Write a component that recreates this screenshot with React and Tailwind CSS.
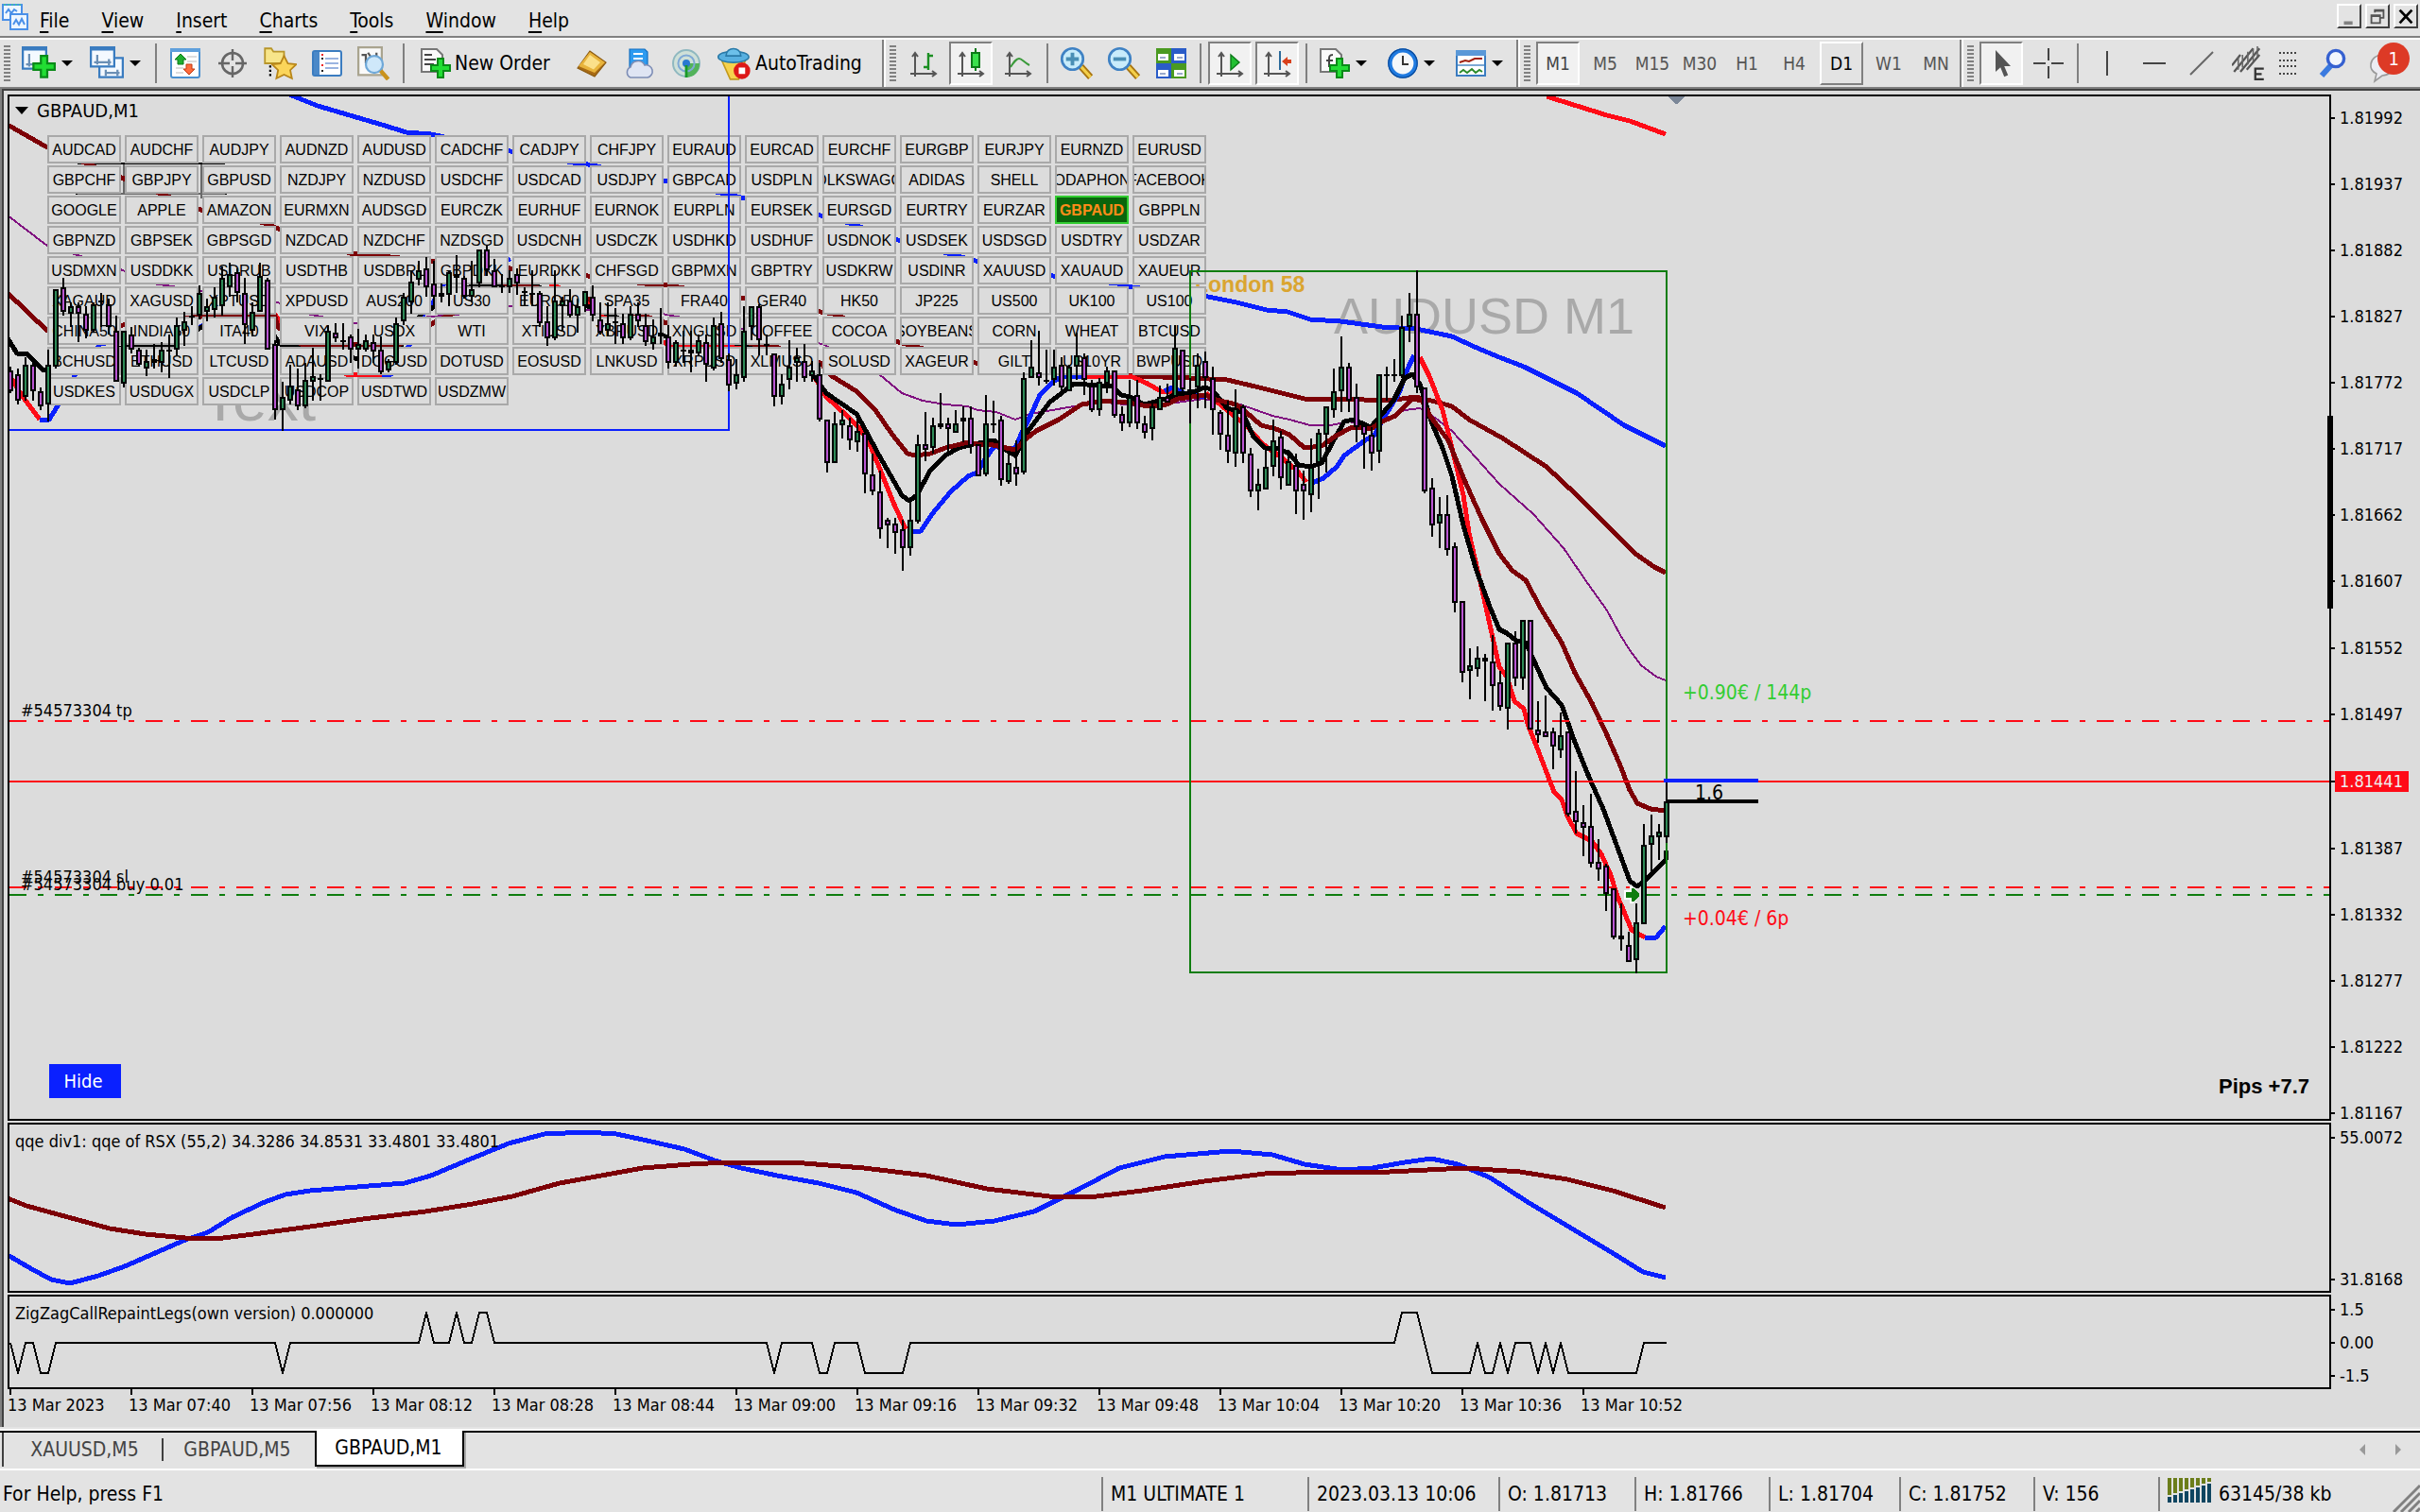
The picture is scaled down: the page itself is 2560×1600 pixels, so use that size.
// src/App.jsx
import clsx from "clsx";

const MENU = ["File", "View", "Insert", "Charts", "Tools", "Window", "Help"];

const SYMBOLS = `
AUDCAD AUDCHF AUDJPY AUDNZD AUDUSD CADCHF CADJPY CHFJPY EURAUD EURCAD EURCHF EURGBP EURJPY EURNZD EURUSD
GBPCHF GBPJPY GBPUSD NZDJPY NZDUSD USDCHF USDCAD USDJPY GBPCAD USDPLN VOLKSWAGON ADIDAS SHELL VODAPHONE FACEBOOK
GOOGLE APPLE AMAZON EURMXN AUDSGD EURCZK EURHUF EURNOK EURPLN EURSEK EURSGD EURTRY EURZAR GBPAUD GBPPLN
GBPNZD GBPSEK GBPSGD NZDCAD NZDCHF NZDSGD USDCNH USDCZK USDHKD USDHUF USDNOK USDSEK USDSGD USDTRY USDZAR
USDMXN USDDKK USDRUB USDTHB USDBRL GBPDKK EURDKK CHFSGD GBPMXN GBPTRY USDKRW USDINR XAUUSD XAUAUD XAUEUR
XAGAUD XAGUSD XPTUSD XPDUSD AUS200 US30 EURO50 SPA35 FRA40 GER40 HK50 JP225 US500 UK100 US100
CHINA50 INDIA50 ITA40 VIX USDX WTI XTIUSD XBRUSD XNGUSD COFFEE COCOA SOYBEANS CORN WHEAT BTCUSD
BCHUSD ETHUSD LTCUSD ADAUSD DOGUSD DOTUSD EOSUSD LNKUSD XRPUSD XLMUSD SOLUSD XAGEUR GILT US10YR BWPUSD
USDKES USDUGX USDCLP USDCOP USDTWD USDZMW`
  .trim()
  .split(/\s+/);

const PRICES = [
  "1.81992", "1.81937", "1.81882", "1.81827", "1.81772", "1.81717", "1.81662", "1.81607",
  "1.81552", "1.81497", "1.81441", "1.81387", "1.81332", "1.81277", "1.81222", "1.81167",
];

const DATES = [
  "2023", "07:40", "07:56", "08:12", "08:28", "08:44", "09:00",
  "09:16", "09:32", "09:48", "10:04", "10:20", "10:36", "10:52",
];

// high, open/close top, open/close bottom, low, 1 = bullish
const CANDLES = `
194,196,207,208,0 195,198,212,214,0 189,193,210,212,1 191,193,207,212,0 205,207,215,217,0 185,193,214,223,1
153,153,194,195,1 147,152,165,167,0 160,162,166,173,1 160,162,166,181,0 162,166,175,179,0 160,161,175,176,1
155,159,160,173,1 158,161,173,177,0 167,175,202,202,0 175,175,203,205,1 173,177,185,187,0 184,185,193,194,0
185,191,195,199,1 182,190,192,195,1 181,185,192,197,1 177,185,186,200,0 168,172,185,188,1 165,170,175,183,1
162,167,168,172,1 151,155,167,169,1 158,162,165,170,1 152,157,164,168,1 141,147,162,167,1 139,145,152,157,1
142,144,155,160,0 147,155,172,182,0 160,165,175,178,1 139,146,165,165,1 147,148,185,185,0 180,182,217,222,0
202,210,217,228,1 193,204,212,214,1 195,206,215,217,0 192,201,215,216,1 184,199,202,212,1 198,200,201,212,1
172,175,202,202,1 171,176,179,181,0 171,180,181,185,1 177,178,185,192,0 174,182,185,195,1 177,180,185,186,1
177,181,186,192,0 178,185,197,198,0 190,191,196,197,1 168,171,192,193,1 155,157,170,172,1 143,149,160,166,1
138,143,148,151,1 136,142,152,157,0 138,150,157,162,0 150,155,157,160,1 143,144,156,162,1 135,145,147,155,0
146,147,157,158,0 138,153,157,160,1 132,132,150,152,1 130,132,143,146,0 137,143,152,152,0 145,151,152,155,0
143,147,152,155,1 142,145,150,156,0 152,154,155,162,0 143,155,156,162,1 154,155,171,173,0 162,170,179,183,0
143,159,179,180,1 157,159,162,175,1 153,159,167,168,0 158,162,167,176,1 154,154,162,165,1 151,157,167,170,0
160,169,176,177,0 160,171,175,178,1 163,170,171,182,1 166,171,179,182,0 162,166,179,180,1 160,166,170,173,0
166,172,181,183,0 169,178,182,185,1 163,176,178,182,0 172,178,192,195,0 180,181,192,194,1 175,185,186,192,1
175,185,187,197,0 177,180,187,188,1 177,181,193,202,0 168,172,195,196,1 165,171,190,192,0 187,190,204,207,0
190,198,203,206,1 162,175,200,202,1 162,162,173,180,1 161,162,180,188,0 177,182,183,188,1 187,187,210,215,0
198,203,210,214,1 180,194,201,206,1 184,189,192,202,1 182,191,200,202,0 191,196,199,202,1 192,198,222,223,0
222,222,245,250,0 218,224,245,245,1 217,222,225,232,1 221,225,233,238,0 218,228,234,239,1 227,229,251,261,0
240,251,260,262,0 249,260,280,285,0 274,275,278,290,0 274,277,282,293,0 275,280,290,302,0 266,275,290,294,1
230,235,276,277,1 218,235,238,244,0 221,225,237,240,1 208,224,226,227,1 221,224,227,241,0 217,224,229,229,1
215,221,223,234,1 215,221,236,240,0 235,235,252,252,0 209,224,251,252,1 212,224,225,229,1 220,222,254,257,0
240,245,255,256,1 233,247,251,257,0 197,200,250,251,1 180,194,200,200,1 175,197,200,204,0 185,201,202,203,1
185,194,201,204,1 189,193,205,208,0 193,194,207,207,1 176,188,194,201,1 187,189,201,209,0 201,204,217,218,0
200,202,217,220,1 194,196,203,208,1 196,196,220,221,0 215,219,224,228,0 201,210,224,226,1 201,209,224,227,0
220,224,229,232,0 213,215,227,233,1 204,210,217,217,1 203,210,213,213,0 172,184,210,210,1 185,185,206,207,0
200,206,207,224,1 187,193,205,216,1 186,191,200,216,0 194,200,217,230,0 217,218,230,238,0 212,230,239,245,0
206,216,240,247,1 214,215,240,245,0 237,240,260,263,0 248,256,260,270,1 237,247,259,259,1 222,233,247,252,1
228,231,253,259,0 238,244,257,257,1 240,246,260,272,0 249,256,260,275,0 232,247,262,271,1 227,229,245,264,1
215,215,230,250,1 195,207,217,221,1 178,194,207,218,1 192,194,212,218,0 203,210,226,234,0 223,225,230,248,0
226,230,240,249,0 198,198,239,245,1 194,198,199,212,1 190,198,199,202,1 167,173,199,200,1 155,166,173,181,1
143,166,205,208,0 205,205,260,261,0 253,258,278,284,0 263,272,277,290,1 262,272,291,294,0 287,289,319,324,0
318,318,356,361,0 343,352,355,370,1 342,348,354,358,1 346,348,350,371,0 336,350,363,376,0 355,361,374,376,0
340,340,375,386,1 334,340,359,363,0 328,328,359,365,1 328,328,386,386,0 371,386,389,393,0 368,387,390,390,0
385,387,395,407,0 377,389,397,401,1 387,387,431,432,0 408,429,435,441,0 426,435,438,453,0 420,437,457,459,0
444,456,460,466,0 457,458,473,482,0 470,470,496,497,0 478,495,497,503,0 493,500,509,509,0 478,488,508,515,1
436,447,489,489,1 431,442,447,461,1 436,440,443,455,1 412,424,443,446,1`
  .trim()
  .split(/\s+/)
  .map((c) => c.split(",").map(Number));

const RED = "#ff0b17";
const BLUE = "#0a20ff";
const MAROON = "#7d0006";

// moving averages, drawn in this order
const AVERAGES = [
  {
    color: "#800f80",
    width: 1,
    points:
      "4,114 25,130 38,134 65,143 81,150 147,160 162,166 188,171 246,166 270,162 350,166 435,182 465,198 477,208 488,212 500,214 512,215 517,217 527,218 537,222 545,219 568,215 585,213 605,215 622,213 637,211 641,212 656,214 673,220 682,222 693,225 704,225 713,223 725,225 734,221 743,217 751,216 759,221 768,228 793,256 811,272 827,290 840,309 850,323 857,336 862,344 868,352 876,358 881,360",
  },
  {
    color: BLUE,
    points:
      "153,50 168,56 185,61 202,66 215,70 228,71 270,80 303,86 311,87 353,96 381,102 394,105 434,114 449,118 475,127 501,134 516,138 557,146 591,150 599,152 639,157 654,160 670,164 681,165 693,169 709,170 731,173 749,174 768,178 781,184 793,189 806,194 834,208 859,225 881,236",
  },
  { color: RED, points: "818,51 850,61 862,64 881,71" },
  {
    color: MAROON,
    points:
      "4,66 25,78 106,111 140,118 147,121 185,134 270,142 311,146 341,150 353,151 394,158 434,165 441,166 475,181 479,182 516,192 570,197 600,199 630,200 649,201 666,205 690,211 709,211 734,212 749,210 761,213 768,215 777,222 795,232 818,247 834,262 850,278 865,293 875,300 881,303",
  },
  {
    color: RED,
    points: "4,197 12,210 21,222",
  },
  {
    color: BLUE,
    points: "21,222 26,222 31,214 40,198 53,182 106,173 119,166",
  },
  { color: RED, points: "145,166 157,182 183,198 202,198" },
  { color: BLUE, points: "202,198 207,198 217,182 224,166 229,160 235,150 270,137" },
  {
    color: RED,
    points:
      "291,150 311,160 318,166 353,182 400,184 430,198 437,210 448,220 455,227 460,235 467,252 473,267 479,280",
  },
  {
    color: BLUE,
    points:
      "482,281 487,281 493,272 503,260 512,252 517,250 521,243 526,236 532,238 537,237 540,230 545,220 550,209 557,202 562,199 582,199",
  },
  { color: RED, points: "572,199 598,199 607,203 614,207 620,207" },
  { color: BLUE, points: "616,207 620,205 628,209 638,210" },
  { color: RED, points: "638,208 649,217 659,225 668,235 679,243 686,249 691,255" },
  {
    color: BLUE,
    points: "693,256 700,253 707,247 711,241 722,233 727,230 732,221 740,208 745,194 748,188",
  },
  {
    color: RED,
    points:
      "751,189 756,199 763,217 768,237 774,262 777,282 783,308 789,335 793,353 797,358 801,371 806,375 808,383 812,393 817,406 822,419 826,423 829,432 834,441 842,445 847,452 852,463 855,473 858,480 863,492 870,496",
  },
  { color: BLUE, points: "870,496 876,496 881,490" },
  {
    color: "#000",
    points:
      "4,179 9,187 14,187 23,196 40,192 53,186 75,182 92,182 118,166 140,170 148,182 190,190 210,186 223,166 252,150 280,150 321,166 352,178 394,182 406,182 430,198 437,208 453,219 458,228 465,241 477,262 481,265 485,262 492,249 500,241 507,237 515,235 526,233 532,238 537,241 543,229 555,213 568,203 582,204 588,204 593,209 598,210 605,214 617,211 623,208 630,208 637,205 641,206 649,216 657,218 663,231 669,237 675,237 682,240 687,246 693,247 699,245 706,232 711,223 716,222 725,226 731,219 737,212 743,200 747,198 751,203 757,223 763,237 768,252 774,278 781,302 788,321 793,333 797,335 802,339 807,340 812,351 818,364 826,373 832,390 840,410 848,428 855,447 862,466 866,469 870,466 881,455 881,450",
  },
  {
    color: MAROON,
    points:
      "4,155 25,175 65,172 120,166 145,166 147,173 159,182 212,182 229,171 239,166 270,150 300,155 353,171 398,182 406,182 434,192 440,199 453,207 463,217 472,230 480,240 484,241 492,240 500,237 512,234 517,235 523,235 537,238 543,232 548,228 560,222 572,214 585,212 597,213 607,215 617,214 623,211 638,209 641,211 654,214 659,218 667,225 675,227 682,230 690,237 699,236 706,231 715,226 725,227 731,223 738,220 747,211 752,212 757,221 766,233 775,255 784,275 793,293 800,302 807,307 815,322 826,340 833,356 842,372 850,389 857,405 862,418 866,425 873,428 881,429",
  },
];

const QQE_FAST =
  "4,664 16,671 27,677 37,679 52,675 66,670 82,663 98,656 110,652 123,644 140,636 151,632 164,630 189,628 214,626 228,622 247,614 269,605 288,600 310,599 326,600 340,603 362,608 378,614 392,618 411,622 433,626 453,631 473,640 490,646 506,648 526,646 547,641 571,629 592,618 616,612 651,609 673,611 690,616 710,619 726,618 743,615 757,613 771,616 788,623 808,636 833,651 853,663 869,673 881,676";
const QQE_SLOW =
  "4,634 14,638 36,644 58,650 77,653 98,655 118,655 134,653 164,649 192,645 225,641 250,637 271,633 296,626 318,622 340,618 365,616 384,615 419,615 457,618 490,622 522,629 555,633 580,633 604,630 637,625 669,621 702,620 735,620 775,618 804,620 829,624 853,630 881,639";
const ZIGZAG =
  "5,710 9,726 13,710 17,710 21,726 25,726 29,710 145,710 149,726 153,710 221,710 225,694 229,710 237,710 241,694 245,710 249,710 253,694 257,694 261,710 405,710 409,726 413,710 429,710 433,726 437,726 441,710 453,710 457,726 477,726 481,710 737,710 741,694 749,694 757,726 777,726 781,710 785,726 789,726 793,710 797,726 801,710 809,710 813,726 817,710 821,726 825,710 829,726 865,726 869,710 881,710";

/* ---------- small icons ---------- */

function Icon({ children, className = "size-8" }) {
  return (
    <svg viewBox="0 0 16 16" className={clsx("shrink-0", className)} aria-hidden="true">
      {children}
    </svg>
  );
}

const Plus = ({ x = 5, y = 5 }) => (
  <path
    transform={`translate(${x} ${y})`}
    d="M4 0.5h3v3.5h3.5v3H7v3.5H4V7H.5V4H4z"
    fill="#22dd33"
    stroke="#0a8a18"
    strokeWidth="1"
  />
);

const Axes = ({ color = "#555" }) => (
  <path d="M3.5 2.5V15M1 13.5h13M2 4.5l1.5-2 1.5 2M12.5 12l2 1.5-2 1.5" fill="none" stroke={color} strokeWidth="1" />
);

const NewChartIcon = () => (
  <Icon className="h-9 w-9">
    <rect x="0.5" y="0.5" width="11" height="10" fill="#f4f9ff" stroke="#3a7cc0" />
    <rect x="0" y="0" width="12" height="2" fill="#3a7cc0" />
    <path d="M3.5 3.5v6M2 8.5h8" stroke="#6b8fb5" fill="none" />
    <Plus x={5} y={4} />
  </Icon>
);

const ProfilesIcon = () => (
  <Icon className="h-9 w-9">
    <rect x="4.5" y="5.5" width="11" height="9" fill="#f4f9ff" stroke="#3a7cc0" />
    <path d="M7 12.5h7M7.5 11v3M13 11v3" stroke="#6b8fb5" fill="none" />
    <rect x="0.5" y="0.5" width="11" height="9" fill="#f4f9ff" stroke="#3a7cc0" />
    <rect x="0" y="0" width="12" height="2" fill="#3a7cc0" />
    <path d="M2 7.5h8M3.5 4v4.500M9 6v3" stroke="#6b8fb5" fill="none" />
  </Icon>
);

const MarketWatchIcon = () => (
  <Icon>
    <rect x="0.5" y="0.5" width="15" height="15" rx="1" fill="#fff" stroke="#4a90d0" />
    <rect x="0" y="0" width="16" height="2" fill="#5fa0dc" />
    <path d="M9 4.500h5M9 7h5M3 10.500h4M3 13h4" stroke="#ddd" />
    <path d="M5.500 3l3 3H7v2.500H4V6H2.500z" fill="#1fae2f" stroke="#0b7a18" strokeWidth=".5" />
    <path d="M10 14l3-3h-1.500V8.500h-3V11H7z" fill="#ff6a3c" stroke="#c03a10" strokeWidth=".5" />
  </Icon>
);

const TargetIcon = () => (
  <Icon>
    <circle cx="8" cy="8" r="5.500" fill="none" stroke="#666" strokeWidth="1.300" />
    <path d="M8 .5v6M8 9.500v6M.5 8h6M9.500 8h6" stroke="#666" strokeWidth="1.200" />
  </Icon>
);

const NavigatorIcon = () => (
  <Icon className="size-9">
    <path d="M1 1h3l1 1.500h5V8H1z" fill="#f7e58a" stroke="#b8962a" strokeWidth=".8" />
    <path d="M3.500 9v6" stroke="#000" strokeDasharray="1 1" />
    <path d="M10 4.500l1.800 3.600 3.900.4-2.800 2.700.8 3.900L10 13.300l-3.600 1.800.8-3.900-2.800-2.700 3.900-.4z" fill="#fbd55a" stroke="#b8861a" strokeWidth=".8" />
  </Icon>
);

const TerminalIcon = () => (
  <Icon>
    <rect x="0.500" y="1.500" width="15" height="13" rx="1" fill="#fff" stroke="#3a7cc0" />
    <rect x="1" y="2" width="3" height="12" fill="#4a88c8" />
    <path d="M7 5.500h7M7 8h7M7 10.500h7" stroke="#9ab4e0" />
    <path d="M5 3.500h1M5 9h1" stroke="#e22" />
    <path d="M5 5.500h1M5 12h1" stroke="#222" />
  </Icon>
);

const TesterIcon = () => (
  <Icon className="size-9">
    <path d="M.5.500h11v13H.5z" fill="#fafafa" stroke="#a9a48f" />
    <path d="M2 4h2v4M9 3v4M5 3l2 3" stroke="#555" fill="none" />
    <circle cx="8" cy="8.500" r="4" fill="#cfe8fa" stroke="#6fa8d8" />
    <path d="M11 11.500l3.500 4" stroke="#c9921c" strokeWidth="2" />
  </Icon>
);

const DocPlusIcon = () => (
  <Icon className="h-9 w-8">
    <path d="M.5.500h8l3 3v9H.5z" fill="#fafafa" stroke="#777" />
    <path d="M2 3.500h4M2 6h6M2 8.500h5" stroke="#444" />
    <Plus x={5} y={5} />
  </Icon>
);

const GoldIcon = () => (
  <Icon>
    <path d="M.5 10.500L7 1.500l8.500 6-6 7.500z" fill="#a86a14" stroke="#8a5a10" strokeWidth=".6" />
    <path d="M1 9.500L7 2l8 5.500-5.500 5.500z" fill="#e8b43c" />
    <path d="M3.500 8.500L7 3.500l5.500 4-3.500 3.700z" fill="#fbe08a" />
  </Icon>
);

const CloudIcon = () => (
  <Icon>
    <path d="M3 .5h8l1.500 1.500v8H3z" fill="#2d9bf0" stroke="#1670c0" strokeWidth=".6" />
    <path d="M5 3h5M5 5.500h5" stroke="#fff" />
    <path d="M3.500 15.500a3 3 0 0 1 0-5.500 4 4 0 0 1 7.500-1 3.200 3.200 0 0 1 1.500 6.500z" fill="#dfe5f3" stroke="#7d8db5" strokeWidth=".8" />
  </Icon>
);

const SignalIcon = () => (
  <Icon>
    <circle cx="8" cy="8" r="7" fill="#cfe0d8" stroke="#8fb8c0" />
    <path d="M8 8h7a7 7 0 0 1-7 7.500z" fill="#53b35a" />
    <circle cx="8" cy="8" r="4.300" fill="none" stroke="#7fa9d6" />
    <circle cx="8" cy="8" r="2" fill="#2a78d0" />
    <path d="M8 9v6.500" stroke="#189a28" strokeWidth="1.400" />
  </Icon>
);

const AutoTradingIcon = () => (
  <Icon className="h-9 w-9">
    <path d="M1.500 5.500h12l-3.500 10H6z" fill="#f6d24c" stroke="#c49a1c" strokeWidth=".7" />
    <ellipse cx="7.500" cy="5" rx="7.200" ry="2.600" fill="#58b0e0" stroke="#2a7aa8" strokeWidth=".7" />
    <path d="M4 4.500C4 0 11 0 11 4.500z" fill="#6cc0ea" stroke="#2a7aa8" strokeWidth=".7" />
    <circle cx="11.500" cy="11.500" r="3.900" fill="#dd1818" />
    <rect x="10" y="10" width="3" height="3" fill="#fff" />
  </Icon>
);

const BarsIcon = () => (
  <Icon>
    <Axes />
    <path d="M10.500 2.500v9M10.500 4h2.500M8 10h2.500" stroke="#1b8f22" strokeWidth="1.200" />
  </Icon>
);

const CandlesIcon = () => (
  <Icon>
    <Axes />
    <path d="M10.500 0v12" stroke="#0b7a18" />
    <rect x="8.500" y="2.500" width="4" height="7.500" fill="#3ae04c" stroke="#0b7a18" />
  </Icon>
);

const LineIcon = () => (
  <Icon>
    <Axes />
    <path d="M4 10C6 7 7 5.500 8.500 5.500S11 7.500 14 9" fill="none" stroke="#3a9a3a" />
  </Icon>
);

const MagnifyIcon = ({ plus }) => (
  <Icon className="size-9">
    <path d="M10 9.500l4.500 5" stroke="#a87410" strokeWidth="3" />
    <path d="M10 9.500l4.500 5" stroke="#f3cf4a" strokeWidth="1.400" />
    <circle cx="6" cy="6" r="5" fill="#c8ecfb" stroke="#3f82c4" strokeWidth="1.200" />
    <path d={plus ? "M3 6h6M6 3v6" : "M3 6h6"} stroke="#4a8fb5" strokeWidth="1.700" />
  </Icon>
);

const TileIcon = () => (
  <Icon>
    <path d="M0 0h8v8H0zM8 8h8v8H8z" fill="#4a9a20" />
    <path d="M8 0h8v8H8zM0 8h8v8H0z" fill="#2a5cc8" />
    <path d="M1 3h5.500v3.500H1zM9.500 3H15v3.500H9.500zM1 11.500h5.500V15H1zM9.500 11.500H15V15H9.500z" fill="#fff" />
    <path d="M2 5h3M11 5h3M2 13.500h3M11 13.500h3" stroke="#9ac" />
  </Icon>
);

const ScrollIcon = () => (
  <Icon>
    <Axes />
    <path d="M8.500 3.500l4.500 4-4.500 4z" fill="#22c032" stroke="#0b7a18" strokeWidth=".7" />
  </Icon>
);

const ShiftIcon = () => (
  <Icon>
    <Axes />
    <path d="M9.500 1.500v10" stroke="#2a6a9a" />
    <path d="M10.500 7l3-2.500V6h2v2h-2v1.500z" fill="#d8401c" />
  </Icon>
);

const IndicatorsIcon = () => (
  <Icon className="h-9 w-8">
    <path d="M.5.500h8l3 3v9H.5z" fill="#fafafa" stroke="#777" />
    <path d="M7 3.500c-2 0-2 1-2 2.500v4M3.500 6.500H7" stroke="#444" fill="none" />
    <Plus x={5} y={5} />
  </Icon>
);

const ClockIcon = () => (
  <Icon>
    <circle cx="8" cy="8" r="6.800" fill="#f4f7fa" stroke="#1f7ae0" strokeWidth="2.200" />
    <circle cx="8" cy="8" r="7.600" fill="none" stroke="#0a4a9a" strokeWidth=".6" />
    <path d="M8 4v4.500h3" stroke="#333" fill="none" />
  </Icon>
);

const TemplateIcon = () => (
  <Icon>
    <rect x="0.500" y="1.500" width="15" height="13" fill="#fff" stroke="#3a7cc0" />
    <rect x="0" y="1" width="16" height="3" fill="#5a98d8" />
    <path d="M1 9h14" stroke="#7da9d4" />
    <path d="M2 7.500l3-1 2 .5 3-1.500h4" stroke="#a02010" fill="none" />
    <path d="M2 13l2-1.500L6 13l2.500-2 2 2 2-1.500 1.500 1" stroke="#2a8a2a" fill="none" />
  </Icon>
);

const CursorIcon = () => (
  <Icon>
    <path d="M5 1v11.500l2.600-2.400 2 5 2-.9-2-4.700H13z" fill="#555" />
  </Icon>
);

const CrossIcon = () => (
  <Icon>
    <path d="M8 0v6.500M8 9.500V16M0 8h6.500M9.500 8H16" stroke="#444" />
  </Icon>
);

const VLineIcon = () => (
  <Icon>
    <path d="M8 1.500v13" stroke="#444" />
  </Icon>
);

const HLineIcon = () => (
  <Icon>
    <path d="M2 8h12" stroke="#444" />
  </Icon>
);

const TrendIcon = () => (
  <Icon>
    <path d="M2 14L14 2" stroke="#666" />
  </Icon>
);

// hatched equidistant channel with an "E" mark
const ChannelIcon = () => (
  <Icon className="size-9">
    <path d="M0 9L4 4M1 12l9-11M4 12l9-11M7 11l6-7" stroke="#555" fill="none" />
    <path d="M3 5v6M5 4v6M7.500 2.500v6M10 1v6M12 0v5" stroke="#666" strokeWidth=".7" fill="none" />
    <path d="M10.500 10.500H15M10.500 15.500H15M10.500 13h3.500M11 10v6" stroke="#333" />
  </Icon>
);

const FiboIcon = () => (
  <Icon className="size-8">
    <path d="M3 2.500h10M3 6.500h10M3 9.500h10M3 13.500h10" stroke="#444" strokeDasharray="1 1" />
  </Icon>
);

const SearchIcon = () => (
  <Icon className="size-8">
    <path d="M7.500 9L2.500 14.500" stroke="#3a7adf" strokeWidth="3" />
    <circle cx="10" cy="5.500" r="4.300" fill="#f2f6fd" stroke="#3560d0" strokeWidth="1.700" />
  </Icon>
);

/* ---------- toolbar pieces ---------- */

function Tool({ label, pressed, wide, children }) {
  return (
    <button
      type="button"
      aria-label={label}
      aria-pressed={pressed}
      className={clsx(
        "flex h-[46px] shrink-0 items-center",
        wide ? "w-[72px] gap-1.5 pl-2" : "mx-0.5 w-[46px] justify-center",
        pressed && "border-2 border-t-[#808080] border-r-white border-b-white border-l-[#808080] bg-[#f1f1f1]"
      )}
    >
      {children}
      {wide && <span className="border-x-[6px] border-t-[6px] border-x-transparent border-t-black" />}
    </button>
  );
}

const Divider = () => <span className="mx-[5px] h-[42px] w-0.5 shrink-0 bg-[#808080]" />;

const Grip = () => (
  <span className="mx-1 h-[38px] w-[7px] shrink-0 bg-[repeating-linear-gradient(#808080_0_2px,transparent_2px_4px)]" />
);

const GroupEnd = () => <span className="h-[50px] w-1 shrink-0 border-l-2 border-[#808080] bg-white" />;

function Toolbar() {
  return (
    <div className="flex h-[50px] items-center overflow-hidden">
      <Grip />
      <Tool label="New chart" wide><NewChartIcon /></Tool>
      <Tool label="Profiles" wide><ProfilesIcon /></Tool>
      <Divider />
      <Tool label="Market Watch"><MarketWatchIcon /></Tool>
      <Tool label="Data Window"><TargetIcon /></Tool>
      <Tool label="Navigator"><NavigatorIcon /></Tool>
      <Tool label="Terminal"><TerminalIcon /></Tool>
      <Tool label="Strategy Tester"><TesterIcon /></Tool>
      <Divider />
      <button type="button" className="flex h-[46px] w-[168px] shrink-0 items-center gap-1 pl-3 whitespace-nowrap">
        <DocPlusIcon /> New Order
      </button>
      <Tool label="MetaEditor"><GoldIcon /></Tool>
      <Tool label="Cloud"><CloudIcon /></Tool>
      <Tool label="Signals"><SignalIcon /></Tool>
      <button type="button" className="flex h-[46px] w-[182px] shrink-0 items-center gap-1 pl-2 whitespace-nowrap">
        <AutoTradingIcon /> AutoTrading
      </button>
      <GroupEnd />
      <Grip />
      <Tool label="Bar chart"><BarsIcon /></Tool>
      <Tool label="Candlesticks" pressed><CandlesIcon /></Tool>
      <Tool label="Line chart"><LineIcon /></Tool>
      <Divider />
      <Tool label="Zoom in"><MagnifyIcon plus /></Tool>
      <Tool label="Zoom out"><MagnifyIcon /></Tool>
      <Tool label="Tile windows"><TileIcon /></Tool>
      <Divider />
      <Tool label="Auto scroll" pressed><ScrollIcon /></Tool>
      <Tool label="Chart shift" pressed><ShiftIcon /></Tool>
      <Divider />
      <Tool label="Indicators" wide><IndicatorsIcon /></Tool>
      <Tool label="Periods" wide><ClockIcon /></Tool>
      <Tool label="Templates" wide><TemplateIcon /></Tool>
      <GroupEnd />
      <Grip />
      {["M1", "M5", "M15", "M30", "H1", "H4", "D1", "W1", "MN"].map((tf) => (
        <button
          key={tf}
          type="button"
          className={clsx(
            "mx-0.5 h-[46px] w-[46px] shrink-0 border-2 text-[19px]",
            tf === "M1" && "border-t-[#808080] border-r-white border-b-white border-l-[#808080] bg-[#f1f1f1] text-[#444]",
            tf === "D1" && "border-t-white border-r-[#808080] border-b-[#808080] border-l-white text-black",
            tf !== "M1" && tf !== "D1" && "border-transparent text-[#555]"
          )}
        >
          {tf}
        </button>
      ))}
      <GroupEnd />
      <Grip />
      <Tool label="Cursor" pressed><CursorIcon /></Tool>
      <Tool label="Crosshair"><CrossIcon /></Tool>
      <Divider />
      <Tool label="Vertical line"><VLineIcon /></Tool>
      <Tool label="Horizontal line"><HLineIcon /></Tool>
      <Tool label="Trendline"><TrendIcon /></Tool>
      <Tool label="Equidistant channel"><ChannelIcon /></Tool>
      <span className="flex w-[34px] shrink-0 justify-center overflow-hidden"><FiboIcon /></span>
      <span className="flex-1" />
      <Tool label="Search"><SearchIcon /></Tool>
      <button type="button" aria-label="Notifications" className="relative mr-2.5 ml-3 h-[46px] w-[46px] shrink-0">
        <svg viewBox="0 0 23 23" className="h-full w-full">
          <path d="M2 12a6 5.500 0 1 1 6 6l-4 3 1-4a6 5 0 0 1-3-5z" fill="#ececf2" stroke="#999" strokeWidth=".8" />
          <circle cx="14" cy="9" r="8.500" fill="#dd3a26" />
        </svg>
        <span className="absolute top-1.5 right-3 text-[20px] leading-6 text-white">1</span>
      </button>
    </div>
  );
}

const CONTROLS = {
  Minimize: <path d="M3 10h5" stroke="#808080" strokeWidth="2" />,
  Restore: (
    <path d="M4.500 4V2.500h5V7H8M2.500 5.500h5V10h-5zM4 3h6M2 6h6" stroke="#555" fill="none" />
  ),
  Close: <path d="M2.500 2.500l7 7.500M9.500 2.500l-7 7.500" stroke="#000" strokeWidth="1.500" />,
};

function MenuBar() {
  return (
    <nav className="flex h-[38px] items-start">
      <svg viewBox="0 0 14 14" className="mt-1 ml-0.5 size-7">
        <rect x="0.500" y="0.500" width="10" height="8" fill="#eef6ff" stroke="#4b90e8" />
        <path d="M1 .5h9M4.500 5.500h10" stroke="#3fb8b0" strokeDasharray="1 1" />
        <path d="M2 5l1.500-2L5 5l1.500-2L8 4" stroke="#4b90e8" fill="none" />
        <rect x="4.500" y="5.500" width="9" height="8" fill="#eef6ff" stroke="#4b90e8" />
        <path d="M6 11l1.500-2.500L9 11l1.500-3L12 11" stroke="#4b90e8" fill="none" />
      </svg>
      <ul className="flex gap-[34px] pt-2 pl-3">
        {MENU.map((item) => (
          <li key={item}>
            <button type="button" className="leading-7">
              <span className="underline underline-offset-4">{item[0]}</span>
              {item.slice(1)}
            </button>
          </li>
        ))}
      </ul>
      <div className="mt-1 mr-0.5 ml-auto flex gap-1">
        {Object.keys(CONTROLS).map((name) => (
          <button
            key={name}
            type="button"
            aria-label={name}
            className="size-[26px] border-2 border-t-white border-r-[#404040] border-b-[#404040] border-l-white"
          >
            <svg viewBox="0 0 12 12" className="h-full w-full">{CONTROLS[name]}</svg>
          </button>
        ))}
      </div>
    </nav>
  );
}

/* ---------- chart ---------- */

// The price pane draws on a grid of 2px cells
function Plot({ top, className, children, labels }) {
  return (
    <svg className={clsx("pointer-events-none absolute inset-0 h-full w-full", className)}>
      <g transform={`scale(2) translate(-5 ${-top})`} shapeRendering="crispEdges">
        {children}
      </g>
      {labels && <g transform={`translate(-10 ${-top * 2})`}>{labels}</g>}
    </svg>
  );
}

function Line({ points, color, width = 2.5 }) {
  return <polyline points={points} fill="none" stroke={color} strokeWidth={width} strokeLinejoin="round" />;
}

function Candle({ x, data }) {
  const [high, top, bottom, low, up] = data;
  const flat = bottom - top < 2;
  return (
    <>
      <rect x={x} y={high} width="1" height={low - high} fill="#000" />
      <rect x={x - 1} y={top} width="3" height={Math.max(1, bottom - top)} fill="#000" />
      {!flat && (
        <rect x={x} y={top + 1} width="1" height={bottom - top - 2} fill={up ? "#2e8b57" : "#ba55d3"} />
      )}
    </>
  );
}

function PriceChart() {
  return (
    <>
      <Plot
        top={51}
        labels={
          <g fontFamily="Liberation Sans" fill="#a9a9a9">
            <text x="213" y="445" fontSize="66">Text</text>
            <text x="1411" y="353" fontSize="54">AUDUSD M1</text>
            <text x="1264" y="309" fontSize="23" fontWeight="bold" fill="#daa530">London 58</text>
          </g>
        }
      >
        <path d="M41 86h78v1H41zM40 102h80v1H40z" fill="#000" />
        <path d="M65 87h1v15h-1zM106 87h1v18h-1zM41 102h78v1H41z" fill="#696969" />
      </Plot>
      <Plot top={51}>
        {AVERAGES.map((ma, i) => (
          <Line key={i} {...ma} />
        ))}
        <path d="M882 51h9l-4 4h-1z" fill="#7b8798" />
      </Plot>

      <div className="absolute top-[41px] left-[40px] grid grid-cols-[repeat(15,78px)] gap-x-1 gap-y-0.5 font-['Liberation_Sans',Arial,sans-serif] text-[16px]">
        {SYMBOLS.map((symbol) => (
          <button
            key={symbol}
            type="button"
            className={clsx(
              "flex h-[30px] items-center justify-center overflow-hidden border-2 pt-0.5 whitespace-nowrap",
              symbol === "GBPAUD"
                ? "border-[#32cd32] bg-[#0a640c] font-bold text-[#ff8c1a]"
                : "border-[#a9a9a9] bg-[#dcdcdc] text-black"
            )}
          >
            {symbol}
          </button>
        ))}
      </div>

      <Plot
        top={51}
        labels={
          <g fontSize="18">
            <path d="M16 113h14l-7 8z" />
            <text x="39" y="124" fontSize="20">GBPAUD,M1</text>
            <text x="22" y="758">#54573304 tp</text>
            <text x="22" y="934">#54573304 sl</text>
            <text x="22" y="942">#54573304 buy 0.01</text>
            <text x="1780" y="740" fontSize="21" fill="#32cd32">+0.90€ / 144p</text>
            <text x="1780" y="979" fontSize="21" fill={RED}>+0.04€ / 6p</text>
            <text x="1793" y="846" fontSize="21">1.6</text>
          </g>
        }
      >
        <path d="M5 381.500H9999M5 469.500H9999" stroke={RED} strokeDasharray="9 6 3 6" />
        <path d="M5 473.500H9999" stroke="#0f7d0f" strokeDasharray="9 6 3 6" />
        <path d="M5 413.500H9999" stroke={RED} />
        <path d="M385.500 51v176.500H0" fill="none" stroke={BLUE} />
        <rect x="629.500" y="143.500" width="252" height="371" fill="none" stroke="#0f7d0f" />
        {CANDLES.map((data, i) => (
          <Candle key={i} x={5 + i * 4} data={data} />
        ))}
        <path d="M880 412h50v2h-50z" fill={BLUE} />
        <path d="M881 423h49v2h-49z" fill="#000" />
        <path d="M859 471h3v-2h2l3 4v1l-3 4h-2v-2h-3z" fill="#fff" />
        <path d="M860 472h3v-2h1l3 3v1l-3 3h-1v-2h-3z" fill="#0f7d0f" />
      </Plot>

      <button type="button" className="absolute bottom-[22px] left-[42px] h-9 w-[76px] bg-[#0a20ff] pr-1 text-[20px] text-white">
        Hide
      </button>
      <strong className="absolute right-[21px] bottom-5 font-['Liberation_Sans',Arial,sans-serif] text-[22px] leading-7">
        Pips +7.7
      </strong>
    </>
  );
}

function Axis({ values, className }) {
  return (
    <div className={clsx("relative flex w-[90px] shrink-0 flex-col justify-between text-[18px] leading-5", className)}>
      {values.map((value) => {
        const current = value === "1.81441";
        return (
          <div key={value} className="flex items-center">
            <span className="h-0.5 w-1 bg-black" />
            <span className={clsx("w-[78px] pl-[5px]", current && "bg-[#ff0b17] leading-[22px] text-[#eee]")}>
              {value}
            </span>
          </div>
        );
      })}
    </div>
  );
}

function ChartWindow() {
  return (
    <main className="flex flex-1 flex-col border-t-2 border-l-2 border-t-[#808080] border-l-[#808080]">
      <div className="flex flex-1 flex-col border-t-2 border-l-2 border-[#404040] bg-[#dcdcdc] pt-1 pr-1 pl-1">
        <section className="flex min-h-[1086px] flex-1">
          <div className="relative flex-1 overflow-hidden border-2 border-black">
            <PriceChart />
          </div>
          <div className="relative flex">
            <span className="absolute top-[340px] -left-1 h-[204px] w-1.5 bg-black" />
            <Axis values={PRICES} className="-mb-0.5 pt-[15px]" />
          </div>
        </section>

        <section className="mt-0.5 flex h-[180px]">
          <div className="relative flex-1 overflow-hidden border-2 border-black">
            <Plot top={595}>
              <Line points={QQE_FAST} color={BLUE} />
              <Line points={QQE_SLOW} color={MAROON} />
            </Plot>
            <p className="relative pt-1.5 pl-1.5 text-[18px] leading-6">
              qqe div1: qqe of RSX (55,2) 34.3286 34.8531 33.4801 33.4801
            </p>
          </div>
          <Axis values={["55.0072", "31.8168"]} className="pt-1.5 pb-1" />
        </section>

        <section className="mt-0.5 flex h-[100px]">
          <div className="relative flex-1 overflow-hidden border-2 border-black">
            <Plot top={686}>
              <g transform="translate(0.5 0.5)">
                <Line points={ZIGZAG} color="#000" width={1} />
              </g>
            </Plot>
            <p className="relative pt-1.5 pl-1.5 text-[18px] leading-6">ZigZagCallRepaintLegs(own version) 0.000000</p>
          </div>
          <Axis values={["1.5", "0.00", "-1.5"]} className="pt-1.5 pb-1" />
        </section>

        <div className="flex h-10 overflow-hidden text-[18px] leading-[22px] whitespace-nowrap">
          {DATES.map((date) => (
            <div key={date} className="w-32 shrink-0">
              <span className="ml-0.5 block h-1.5 w-0.5 bg-black" />
              13 Mar {date}
            </div>
          ))}
        </div>
      </div>
    </main>
  );
}

function ChartTabs() {
  return (
    <div className="mt-0.5 flex h-11 items-start border-t-2 border-b-2 border-white">
      <div className="flex h-[38px] flex-1 border-t-2 border-black">
        <span className="ml-0.5 w-0.5 bg-[#404040]" />
        <button type="button" className="w-[167px] pl-1 text-[#444]">XAUUSD,M5</button>
        <span className="my-1.5 w-0.5 bg-[#404040]" />
        <button type="button" className="w-[160px] pr-1 text-[#444]">GBPAUD,M5</button>
        <button
          type="button"
          className="-mt-0.5 w-[158px] border-x-2 border-b-2 border-black bg-white pr-0.5 shadow-[2px_2px_0_#a8a8a8]"
        >
          GBPAUD,M1
        </button>
        <div className="mr-5 ml-auto flex items-center gap-8">
          <button type="button" aria-label="Scroll tabs left">
            <svg viewBox="0 0 3 6" className="h-3 w-1.5"><path d="M3 0v6L0 3z" fill="#999" /></svg>
          </button>
          <button type="button" aria-label="Scroll tabs right">
            <svg viewBox="0 0 3 6" className="h-3 w-1.5"><path d="M0 0v6l3-3z" fill="#999" /></svg>
          </button>
        </div>
      </div>
    </div>
  );
}

function Cell({ className, children }) {
  return (
    <div className={clsx("flex h-9 shrink-0 items-center border-l-2 border-[#808080] pl-2 whitespace-nowrap", className)}>
      {children}
    </div>
  );
}

function StatusBar() {
  return (
    <footer className="relative flex h-11 items-center pt-1.5">
      <p className="flex-1 pl-[3px]">For Help, press F1</p>
      <Cell className="w-[218px]">M1 ULTIMATE 1</Cell>
      <Cell className="w-[202px]">2023.03.13 10:06</Cell>
      <Cell className="w-[144px]">O: 1.81713</Cell>
      <Cell className="w-[142px]">H: 1.81766</Cell>
      <Cell className="w-[138px]">L: 1.81704</Cell>
      <Cell className="w-[142px]">C: 1.81752</Cell>
      <Cell className="w-[132px]">V: 156</Cell>
      <Cell className="w-[277px] gap-2">
        <svg viewBox="0 0 23 13" className="mb-2 h-[26px] w-[46px]">
          {[9, 8, 7, 6, 5, 4, 3, 2].map((h, i) => (
            <g key={i}>
              <rect x={i * 3} y="0" width="2" height={h} fill="#6b7d1a" />
              <rect x={i * 3} y={h + 1} width="2" height={12 - h} fill="#0f4560" />
            </g>
          ))}
        </svg>
        63145/38 kb
      </Cell>
      <svg viewBox="0 0 15 15" className="absolute right-0 bottom-0 size-[30px]">
        <path d="M15 1L1 15M15 5L5 15M15 9l-6 6M15 13l-2 2" stroke="#808080" strokeWidth="1.500" />
      </svg>
    </footer>
  );
}

export default function App() {
  return (
    <div className="flex min-h-screen flex-col bg-[#e3e3e3] font-['DejaVu_Sans_Condensed','DejaVu_Sans',Tahoma,sans-serif] text-[21px] leading-7 text-black">
      <MenuBar />
      <div className="h-1 border-t-2 border-[#808080] bg-white" />
      <Toolbar />
      <ChartWindow />
      <ChartTabs />
      <StatusBar />
    </div>
  );
}
